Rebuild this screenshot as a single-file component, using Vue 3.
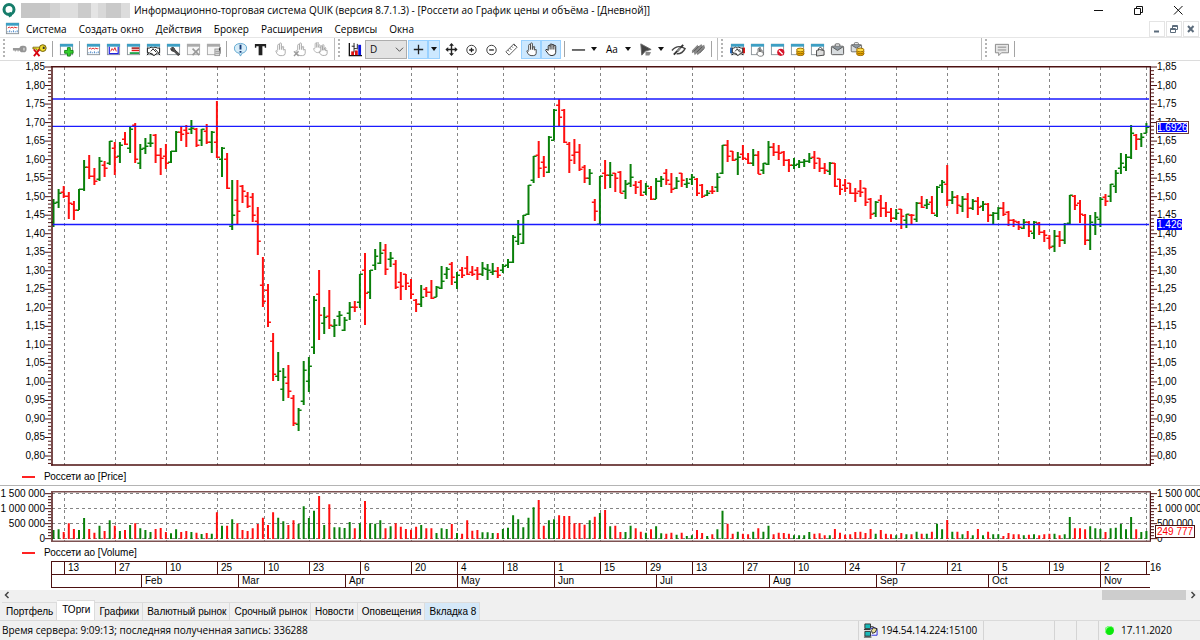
<script setup>
import { computed, ref } from 'vue'

// One bar per trading day: direction, high, low, open, close (plot units).
const priceSeries = `
u199,227,222,203 u189,208,202,193 d186,198,192,196 d192,219,196,203 d201,220,204,210 u189,210,210,189 u160,191,189,167
d155,179,167,176 d168,185,176,181 u157,181,179,161 d161,177,165,168 u141,165,163,141 d142,175,148,157 u142,163,156,145
d132,145,139,144 u127,153,148,129 d123,163,125,159 u144,169,163,149 u138,154,148,146 u134,147,143,143 d134,163,135,155
d148,175,155,158 d144,169,156,163 u151,163,162,151 u131,152,151,132 d126,141,132,134 d125,147,130,133 u120,134,129,128
d128,147,129,145 u129,146,140,129 d124,144,131,142 u131,153,142,132 d101,158,142,157 u147,177,159,148 d153,189,159,188
u180,230,226,215 d180,225,200,211 d185,203,186,191 d192,208,196,206 d193,222,197,215 d207,255,221,241 d257,307,285,301
d284,327,290,322 d333,381,341,374 u352,381,376,371 u368,401,389,377 d365,398,383,391 d395,426,398,423 u408,431,424,410
u361,405,401,370 u357,392,381,366 u296,354,347,300 d270,340,294,315 u307,334,323,317 d290,329,316,325 u319,337,326,325
u311,326,316,315 u317,331,330,320 u302,320,313,307 d301,312,307,307 u274,308,302,274 d253,325,270,293 u270,299,292,270
u249,270,265,256 u242,264,263,253 d244,275,250,269 u252,267,259,258 d260,289,264,287 d272,300,282,286 d274,290,274,283
d279,299,286,294 d299,312,300,304 u285,307,304,297 d287,297,289,292 d280,299,292,298 u286,297,297,287 u266,289,288,281
u267,279,274,269 d262,285,264,277 u272,289,282,275 d267,278,270,275 d256,275,268,274 d266,276,272,274 d267,280,270,274
u262,276,274,268 u264,280,269,270 u263,275,272,271 d267,278,271,275 u264,273,270,266 u259,268,265,262 u235,263,262,237
u220,245,241,234 u215,244,243,215 u185,215,214,185 u156,183,180,156 d141,178,155,168 d156,177,162,167 u136,173,172,137
u109,140,140,110 d99,126,105,117 d109,143,110,142 d142,173,144,160 d139,164,155,152 d144,171,152,169 d165,183,167,178
u169,185,178,173 d199,221,202,211 u176,224,224,176 d160,189,173,175 u162,188,175,175 d173,192,173,178 d171,193,172,193
u180,199,191,184 u164,187,183,177 d181,194,185,187 d180,196,182,195 u183,195,192,186 d186,200,188,199 u178,199,199,181
u176,187,181,179 d169,185,173,180 d173,193,184,189 u177,189,188,181 d173,187,173,180 u178,188,184,183 u174,185,179,177
d178,196,179,193 d184,198,185,196 u190,196,195,193 d186,194,191,191 u173,192,187,177 u145,174,173,145 d140,162,145,156
d151,161,151,160 u152,175,159,157 d145,160,154,158 d153,164,159,163 u149,166,163,155 d151,174,155,174 u163,174,170,163
u141,165,164,147 d143,156,147,152 d145,160,152,153 d151,166,152,160 d159,172,160,165 u158,169,165,165 u160,168,164,162
u159,167,162,161 u153,163,161,158 d151,169,157,163 d158,172,158,168 d163,174,168,170 u162,175,171,163 d163,187,163,186
d179,195,179,189 d179,192,185,188 d183,194,183,193 d188,202,193,193 d180,197,191,192 d188,206,188,202 d198,219,199,214
u201,217,213,202 d195,217,200,208 d202,217,208,212 d208,222,212,218 u209,220,218,213 d209,229,209,216 u214,228,220,214
d214,225,215,215 u202,222,219,203 d196,208,203,207 u199,209,205,204 d196,214,202,213 u186,217,215,187 u180,193,185,182
d165,206,184,200 u191,204,200,197 d195,214,197,205 u196,212,206,199 d193,218,199,208 u199,210,208,201 d197,215,201,207
u201,211,206,204 d203,222,204,215 u212,224,215,213 u207,220,213,208 d202,216,208,214 d211,226,212,220 d219,227,220,221
d221,230,222,227 u219,229,228,222 d221,237,222,231 u221,239,233,222 d222,235,223,232 d230,242,232,235 d235,249,238,247
u230,252,246,236 d231,247,236,240 u223,244,240,224 u195,225,223,195 d195,210,196,205 d200,223,203,214 d214,245,215,240
u215,250,240,222 u212,235,225,217 u197,227,219,199 d194,206,197,201 u184,202,196,184 u170,193,186,173 u153,174,168,163
u154,171,167,157 u125,159,157,133 d134,150,135,139 u133,147,139,137 u123,133,133,127`

// Top of each volume column; the zero line is at 236, 1 500 000 at 101.
const volumeTops = `
210 208 216 190 207 210 174 207 218 197 213 181 197 213 210 195 190 205 210 216 207 204 216 220 208 216 213 216 218 222
219 221 157 197 197 178 190 210 213 205 192 173 195 157 173 184 195 181 192 139 174 152 108 195 133 202 202 204 186 205
190 123 190 191 181 205 199 190 200 207 209 200 195 205 205 219 205 207 192 219 221 181 212 210 217 217 219 219 207 203
166 178 202 173 142 120 197 181 178 166 168 168 190 189 194 181 170 159 150 199 197 216 216 197 205 215 218 208 199 220
221 218 224 218 228 226 210 219 228 223 208 152 191 221 215 221 223 215 205 215 197 223 218 219 221 226 226 226 216 221
220 226 226 207 218 224 223 216 215 219 207 221 210 221 223 226 219 223 223 215 221 221 215 191 208 180 215 215 223 213
226 207 226 215 223 223 228 219 223 223 226 224 223 226 223 221 221 226 223 171 205 205 208 199 205 207 216 205 203 192
208 171 208 216 213`.trim().split(/\s+/).map(Number)

const barX = i => Math.round(535 + 51.07 * i) / 10
const bars = priceSeries.trim().split(/\s+/).map((s, i) => {
  const [high, low, open, close] = s.slice(1).split(',').map(Number)
  return { dir: s[0], x: barX(i), high, low, open, close, vol: volumeTops[i] }
})

const stems = dir => bars.filter(b => b.dir === dir).map(b => `M${b.x} ${b.high}V${b.low}`).join('')
const notches = dir => bars.filter(b => b.dir === dir)
  .map(b => `M${b.x - 3} ${b.open + 0.2}H${b.x}M${b.x} ${b.close + 0.2}H${b.x + 3}`).join('')
const columns = dir => bars.filter(b => b.dir === dir).map(b => `M${b.x} ${b.vol}V237`).join('')

const dayMarks = [
  ['13', 64], ['27', 115], ['10', 166], ['25', 217], ['10', 264], ['23', 309], ['6', 360], ['20', 411], ['4', 457],
  ['18', 503], ['1', 554], ['15', 600], ['29', 646], ['13', 692], ['27', 743], ['10', 794], ['24', 845], ['7', 896],
  ['21', 947], ['5', 998], ['19', 1049], ['2', 1100], ['16', 1146]
]
const monthMarks = [
  ['Feb', 141], ['Mar', 238], ['Apr', 345], ['May', 457], ['Jun', 554], ['Jul', 656], ['Aug', 769], ['Sep', 876],
  ['Oct', 988], ['Nov', 1100]
]
const cells = marks => {
  const all = [['', 51], ...marks]
  return all.map(([label, x], i) => ({ label, grow: (all[i + 1] ? all[i + 1][1] : 1150) - x }))
}
const timeRows = computed(() => [cells(dayMarks), cells(monthMarks)])

const priceLabels = Array.from({ length: 22 }, (_, i) => (1.85 - i * 0.05).toFixed(2).replace('.', ','))
const priceTicks = Array.from({ length: 108 }, (_, i) => ({ y: 67 + i * 3.705, major: i % 5 === 0 }))
const volumeLabels = ['1 500 000', '1 000 000', '500 000', '0']
const volumeTicks = Array.from({ length: 16 }, (_, i) => ({ y: 101 + i * 9, major: i % 5 === 0 }))
const tickPath = (ticks, left) => ticks
  .map(t => left ? `M${t.major ? 0 : 3} ${t.y}H6` : `M0 ${t.y}H${t.major ? 6 : 3}`).join('')

const win = '<rect x="1.5" y="2.5" width="13" height="11" fill="#fff" stroke="#8c9499"/><path d="M1 2h14v3H1z" fill="#3c9fc4"/>'
const winOff = '<rect x="1.5" y="2.5" width="13" height="11" fill="#f6f6f6" stroke="#aaa"/><path d="M1 2h14v3H1z" fill="#aaa"/>'
const hand = c => `<path d="M5 9V3.5q0-1 1-1t1 1V8M7 8V2q0-1 1-1t1 1v6l1-3q1-1 1.5.2L10.800 8.500l2.200-.5v4q0 2.500-3 2.500H7.500Q5.500 14.500 4 12L3 9.500Q4 8.500 5 10" fill="#fff" stroke="${c}"/>`
const coins = '<ellipse cx="11" cy="12.500" rx="4" ry="2" fill="#e9a400" stroke="#9a6a00"/><ellipse cx="11" cy="10.500" rx="4" ry="2" fill="#f5b800" stroke="#9a6a00"/><ellipse cx="11" cy="8.500" rx="4" ry="2" fill="#ffdc4a" stroke="#9a6a00"/>'
const briefcase = '<path d="M5.500 4.500V3q0-1 1-1h3q1 0 1 1v1.500" fill="none" stroke="#555"/><rect x="1.500" y="4.500" width="13" height="9" rx="1" fill="#d8dcdf" stroke="#555"/><path d="M2 5l6 4 6-4" fill="#8d979e" stroke="#555"/>'
const shake = '<path d="M1.500 6.500h2l2-1 2 1 2-1 3 1h2v5h-2l-4 3-5-3h-2z" fill="#fff" stroke="#111"/><path d="M5 10l2.500-2.500L11 11M5.500 11.500l2 2M9.500 7.500l3 3" fill="none" stroke="#222"/><path d="M1 14l2-2M15 14l-2-2" stroke="#111"/>'

const icons = {
  key: '<path d="M1 6.500h8v2.500H7V10H6V9H4v1H3V9H1z" fill="#999"/><rect x="8" y="4" width="7.500" height="7" rx="3" fill="#949494"/><path d="M12 6h1.500v3H12z" fill="#d6d6d6"/>',
  keyOff: '<path d="M1 5.500h8v2H7V9H5V7.500H1z" fill="#f3df2b" stroke="#6b5a00" stroke-width=".8"/><circle cx="11.500" cy="6.500" r="3.600" fill="#f0dc30" stroke="#6b5a00"/><path d="M11.500 5h2v2.500h-2z" fill="#333"/><path d="M2 8l6 7M8 8l-6 7" stroke="#d8000c" stroke-width="2"/>',
  add: win + '<path d="M9 6h3v3h3v3h-3v3H9v-3H6V9h3z" fill="#35d02c" stroke="#118514"/>',
  chart: win + '<path d="M3 7.500l1.500-1 1.500 1 1.500-1 1.500 1 1.500-1 1.500 1 1-1" fill="none" stroke="#e02020"/><path d="M3 12v-1M5 12v-2M7 12v-1M9 12v-2M11 12v-1M13 12v-2" stroke="#3c7ec4"/>',
  tick: win + '<path d="M3.500 5v7.500h9.500V5" fill="none" stroke="#2222e0" stroke-width="1.300"/><path d="M5 10l1.500-3 1.500 2 1.500-3 1.500 4" fill="none" stroke="#e02020"/>',
  quotes: win + '<path d="M6 6.500h8" stroke="#a01515" stroke-width="1.600"/><path d="M6 9h8" stroke="#e01818" stroke-width="1.600"/><path d="M4 11.800h10" stroke="#0a9a3a" stroke-width="1.800"/>',
  deals: win + shake,
  setup: win + '<path d="M6 6q3-1 3.500 2.500l5 4.500-1.500 1.500L8.500 10Q5 10 5 7l2 1z" fill="#555" stroke="#333"/>',
  winX: winOff + '<path d="M7 7l7 7M14 7l-7 7" stroke="#999" stroke-width="1.800"/>',
  winDb: winOff + '<rect x="9.500" y="7.500" width="5" height="7" fill="#ddd" stroke="#999"/><path d="M10 10h4M10 12h4M14 7l1.500-1.500v7" stroke="#999"/>',
  alert: '<path d="M8 1.500q6.500.5 6.500 5T9.500 12L8 15l-1.500-3Q1.500 11 1.500 6.500T8 1.500z" fill="#d6ecf8" stroke="#5fa6cf"/><path d="M8 3v5M8 9.500v2" stroke="#123a78" stroke-width="2"/>',
  text: '<path d="M2 2h12v4h-1.500V4.500H10V14H6V4.500H3.500V6H2z" fill="#222"/>',
  handOff: hand('#aaa'),
  handX: hand('#aaa') + '<path d="M1 10l5 5M6 10l-5 5" stroke="#999" stroke-width="1.500"/>',
  hands: '<g transform="translate(-2 -1) scale(.85)">' + hand('#aaa') + '</g><g transform="translate(4 2) scale(.85)">' + hand('#999') + '</g>',
  bars: '<path d="M2.500 1v13.500H16" fill="none" stroke="#111" stroke-width="1.400"/><path d="M4.500 10h3v4h-3z" fill="#e01010"/><path d="M12 3h3v11h-3z" fill="#0a12e0"/><path d="M8.500 9h3v5h-3z" fill="#e01010"/><path d="M7.500 1v10M5 4.500h3M7.500 7h3M11 2v6" stroke="#222"/>',
  cross: '<path d="M8 3v10M3 8h10" stroke="#222" stroke-width="1.400"/>',
  move: '<path d="M8 2.500v11M2.500 8h11" stroke="#222" stroke-width="1.500"/><path d="M8 1l2.600 3H5.400zM8 15l2.600-3H5.400zM1.500 8l3-2.600v5.200zM14.500 8l-3-2.600v5.200z" fill="#222"/>',
  zoomIn: '<circle cx="8" cy="8.500" r="5" fill="none" stroke="#333"/><path d="M8 6v5M5.500 8.500h5" stroke="#222" stroke-width="1.400"/>',
  zoomOut: '<circle cx="8" cy="8.500" r="5" fill="none" stroke="#333"/><path d="M5.500 8.500h5" stroke="#222" stroke-width="1.400"/>',
  ruler: '<path d="M2 10.500L10.500 2l3.500 3.500L5.500 14z" fill="#fff" stroke="#555"/><path d="M4 8.500l1.500 1.500M6 6.500l2 2M8 4.500l1.500 1.500M10 2.500l2 2" stroke="#555"/>',
  handOne: hand('#444'),
  handOpen: '<path d="M4.500 9V4.500q0-1 1-1t1 1V3q0-1 1-1t1 1v.5q0-1 1-1t1 1v1q0-1 1-1t1 1V11q0 3.500-4 3.500-3 0-4-2L1.800 9q0-1.500 1.400-1z" fill="#fff" stroke="#222"/><path d="M6.500 4v4M8.500 3.500V8M10.500 4v4" stroke="#222"/>',
  line: '<path d="M1 8.500h14" stroke="#222" stroke-width="1.400"/>',
  shape: '<path d="M3 2l11 6-6 1.500L4 14z" fill="#444" stroke="#666"/><path d="M8 10l6 1-2 3.500H8z" fill="#888"/>',
  eye: '<path d="M1 9q6-7 14-2-3 6-9 5.500" fill="none" stroke="#444" stroke-width="1.500"/><path d="M3 13.500L13 3" stroke="#333" stroke-width="2"/><path d="M7 10l3-4" stroke="#888" stroke-width="2"/>',
  brush: '<path d="M1 9l6-6 1 2 3-3 1 2 2-1 1 3-8 8-1-2-2 2-1-3-2 1z" fill="#888"/><path d="M3 10l6-6M6 11l6-6M9 12l5-5" stroke="#555"/>',
  dealWin: win + '<path d="M0 6h3v6H0z" fill="#2a70c0"/><path d="M13 6h3v6h-3z" fill="#d81818"/><g transform="translate(1.200 0) scale(.85 1)">' + shake + '</g>',
  handWin: win + '<g transform="translate(5 5) scale(.7)">' + hand('#444') + '</g>',
  stopWin: win + '<circle cx="11.500" cy="11" r="3.800" fill="#d8152a"/><path d="M9.500 9l4 4" stroke="#fff" stroke-width="1.400"/>',
  coinWin: win + coins,
  lockWin: win + '<path d="M7 9l3-1 5 1v5l-8 1z" fill="#ddd" stroke="#444"/><path d="M9 9V7q2-2.500 4 0v2" fill="none" stroke="#444"/>',
  bag: briefcase,
  bagCoin: '<g transform="translate(0 -1) scale(.85)">' + briefcase + '</g>' + coins,
  note: '<path d="M1.500 2.500h14v9H8l-3 3v-3H1.500z" fill="#e6e6e6" stroke="#888"/><path d="M4 5.500h9M4 8.500h9" stroke="#888"/>'
}

const groups = [
  [['key', 'Подключиться'], ['keyOff', 'Отключиться'], '|', ['add', 'Новая таблица'], '|', ['chart', 'График'],
    ['tick', 'Тиковый график'], ['quotes', 'Котировки'], ['deals', 'Сделки'], ['setup', 'Настройка'],
    ['winX', 'Закрыть окно'], ['winDb', 'Экспорт'], '|', ['alert', 'Оповещение'], ['text', 'Текст'],
    ['handOff', 'Заявка'], ['handX', 'Снять заявку'], ['hands', 'Снять все']],
  [['dealWin', 'Таблица сделок'], ['handWin', 'Таблица заявок'], ['stopWin', 'Стоп-заявки'], ['coinWin', 'Деньги'],
    ['lockWin', 'Лимиты'], ['bag', 'Портфель'], ['bagCoin', 'Портфель клиента']]
]

const menu = ['Система', 'Создать окно', 'Действия', 'Брокер', 'Расширения', 'Сервисы', 'Окна']
const tabs = ['Портфель', 'ТОрги', 'Графики', 'Валютный рынок', 'Срочный рынок', 'Новости', 'Оповещения', 'Вкладка 8']
const activeTab = ref('ТОрги')
const interval = ref('D')
</script>

<template>
  <div class="window">
    <header class="titlebar">
      <svg class="logo" viewBox="0 0 16 16" aria-hidden="true">
        <circle cx="8" cy="7.500" r="5" fill="none" stroke="#167d6b" stroke-width="3" />
        <path d="M7 11l3-1 1 4-3 1.500z" fill="#167d6b" />
      </svg>
      <span class="masked"></span>
      <h1>Информационно-торговая система QUIK (версия 8.7.1.3) - [Россети ао График цены и объёма - [Дневной]]</h1>
      <div class="sysbuttons">
        <button type="button" aria-label="Свернуть"><svg viewBox="0 0 12 12"><path d="M2 6.500h9" /></svg></button>
        <button type="button" aria-label="Восстановить"><svg viewBox="0 0 12 12"><path d="M2.500 4.500h6v6h-6zM4.500 4V2.500h6v6H9" /></svg></button>
        <button type="button" aria-label="Закрыть"><svg viewBox="0 0 12 12"><path d="M2 2l8.500 8.500M10.500 2L2 10.500" /></svg></button>
      </div>
    </header>

    <nav class="menubar">
      <svg class="menu-icon" viewBox="0 0 16 16" aria-hidden="true" v-html="icons.chart"></svg>
      <button v-for="m in menu" :key="m" type="button" class="menu-item">{{ m }}</button>
      <div class="mdi">
        <button type="button" aria-label="Свернуть окно"><svg viewBox="0 0 12 12"><path d="M3 8.500h5" /></svg></button>
        <button type="button" aria-label="Восстановить окно"><svg viewBox="0 0 12 12"><path class="thin" d="M2.500 5.500h5v4h-5zM4.500 5V2.500h5v4H8M4.500 3.500h5M2.500 6.500h5" /></svg></button>
        <button type="button" aria-label="Закрыть окно"><svg viewBox="0 0 12 12"><path d="M3 3l5.500 6M8.500 3L3 9" /></svg></button>
      </div>
    </nav>

    <div class="toolbars">
      <div class="toolbar">
        <i class="grip"></i>
        <template v-for="(t, i) in groups[0]" :key="i">
          <i v-if="t === '|'" class="sep"></i>
          <button v-else type="button" class="tool" :aria-label="t[1]"><svg viewBox="0 0 16 16" v-html="icons[t[0]]"></svg></button>
        </template>
      </div>
      <div class="toolbar">
        <i class="grip"></i>
        <button type="button" class="tool" aria-label="Тип графика"><svg viewBox="0 0 16 16" v-html="icons.bars"></svg></button>
        <span class="combo">
          <select v-model="interval" aria-label="Интервал"><option>D</option><option>W</option></select>
          <svg viewBox="0 0 10 10" aria-hidden="true"><path d="M1 3l4 4 4-4" /></svg>
        </span>
        <button type="button" class="tool on" aria-label="Перекрестие"><svg viewBox="0 0 16 16" v-html="icons.cross"></svg></button>
        <button type="button" class="drop on" aria-label="Вид курсора"></button>
        <button type="button" class="tool" aria-label="Переместить"><svg viewBox="0 0 16 16" v-html="icons.move"></svg></button>
        <button type="button" class="tool" aria-label="Увеличить"><svg viewBox="0 0 16 16" v-html="icons.zoomIn"></svg></button>
        <button type="button" class="tool" aria-label="Уменьшить"><svg viewBox="0 0 16 16" v-html="icons.zoomOut"></svg></button>
        <button type="button" class="tool" aria-label="Линейка"><svg viewBox="0 0 16 16" v-html="icons.ruler"></svg></button>
        <button type="button" class="tool on" aria-label="Выбор"><svg viewBox="0 0 16 16" v-html="icons.handOne"></svg></button>
        <button type="button" class="tool on" aria-label="Прокрутка"><svg viewBox="0 0 16 16" v-html="icons.handOpen"></svg></button>
        <i class="sep"></i>
        <button type="button" class="tool" aria-label="Линия"><svg viewBox="0 0 16 16" v-html="icons.line"></svg></button>
        <button type="button" class="drop" aria-label="Виды линий"></button>
        <button type="button" class="tool label">Aa</button>
        <button type="button" class="drop" aria-label="Виды текста"></button>
        <button type="button" class="tool" aria-label="Фигура"><svg viewBox="0 0 16 16" v-html="icons.shape"></svg></button>
        <button type="button" class="drop" aria-label="Виды фигур"></button>
        <button type="button" class="tool" aria-label="Скрыть"><svg viewBox="0 0 16 16" v-html="icons.eye"></svg></button>
        <button type="button" class="tool" aria-label="Очистить"><svg viewBox="0 0 16 16" v-html="icons.brush"></svg></button>
        <i class="sep"></i>
      </div>
      <div class="toolbar tables">
        <i class="grip"></i>
        <button v-for="t in groups[1]" :key="t[0]" type="button" class="tool" :aria-label="t[1]"><svg viewBox="0 0 16 16" v-html="icons[t[0]]"></svg></button>
      </div>
      <div class="toolbar rest">
        <i class="grip"></i>
        <button type="button" class="tool" aria-label="Сообщения"><svg viewBox="0 0 16 16" v-html="icons.note"></svg></button>
        <i class="sep"></i>
      </div>
    </div>

    <main class="chart">
      <section class="pane price">
        <div class="axis left">
          <div class="labels"><span v-for="l in priceLabels" :key="l">{{ l }}</span></div>
          <svg viewBox="0 66 6 400" preserveAspectRatio="none"><path :d="tickPath(priceTicks, true)" class="tickmarks" /></svg>
        </div>
        <svg class="plot" viewBox="51 66 1100 400" preserveAspectRatio="none">
          <path v-for="d in dayMarks" :key="d[1]" :d="`M${d[1] + 0.5} 67V465`" class="grid" />
          <path :d="stems('u')" class="up" /><path :d="notches('u')" class="up notch" />
          <path :d="stems('d')" class="down" /><path :d="notches('d')" class="down notch" />
          <path d="M52 99H1149M52 126.300H1150M52 224.500H1149" class="level" />
          <path d="M52 66V465.500M1150.500 66V465.500" class="frame" />
          <path d="M51 66.700H1151M51 465H1151" class="frame" />
        </svg>
        <div class="axis right">
          <svg viewBox="0 66 6 400" preserveAspectRatio="none"><path :d="tickPath(priceTicks, false)" class="tickmarks" /></svg>
          <div class="labels"><span v-for="l in priceLabels" :key="l">{{ l }}</span></div>
          <b class="tag last">1.6926</b>
          <b class="tag low">1.426</b>
        </div>
      </section>
      <div class="legend first">Россети ао [Price]</div>
      <section class="pane volume">
        <div class="axis left">
          <div class="labels"><span v-for="l in volumeLabels" :key="l">{{ l }}</span></div>
          <svg viewBox="0 93 6 153" preserveAspectRatio="none"><path :d="tickPath(volumeTicks, true)" class="tickmarks" /></svg>
        </div>
        <svg class="plot" viewBox="51 93 1100 153" preserveAspectRatio="none">
          <path v-for="d in dayMarks" :key="d[1]" :d="`M${d[1] + 0.5} 96V244`" class="grid" />
          <path d="M52 100.500H1150M52 145.500H1150M52 190.500H1150M52 235.500H1150" class="grid" />
          <path :d="columns('u')" class="up" /><path :d="columns('d')" class="down" />
          <path d="M52 94V244M1150.500 94V244" class="frame" />
          <path d="M51 95.500H1151M51 244H1151" class="frame soft" />
        </svg>
        <div class="axis right">
          <svg viewBox="0 93 6 153" preserveAspectRatio="none"><path :d="tickPath(volumeTicks, false)" class="tickmarks" /></svg>
          <div class="labels"><span v-for="l in volumeLabels" :key="l">{{ l }}</span></div>
          <b class="tag vol">249 777</b>
        </div>
      </section>
      <div class="legend">Россети ао [Volume]</div>
      <div class="timeline">
        <div v-for="(row, r) in timeRows" :key="r" class="timerow">
          <span v-for="(c, i) in row" :key="i" :style="{ flexGrow: c.grow }">{{ c.label }}</span>
        </div>
      </div>
    </main>

    <div class="scroll">
      <button type="button" aria-label="Влево"><svg viewBox="0 0 10 10"><path d="M6.500 2l-3 3 3 3" /></svg></button>
      <span class="thumb"></span>
      <button type="button" aria-label="Вправо"><svg viewBox="0 0 10 10"><path d="M3.500 2l3 3-3 3" /></svg></button>
    </div>

    <nav class="tabs">
      <button v-for="t in tabs" :key="t" type="button" :class="{ active: t === activeTab, marked: t === 'Вкладка 8' }" @click="activeTab = t">{{ t }}</button>
    </nav>

    <footer class="status">
      <span class="server">Время сервера: 9:09:13; последняя полученная запись: 336288</span>
      <span class="host">
        <svg viewBox="0 0 16 16" aria-hidden="true">
          <path d="M2 1h6v5H2zM2 9h6v5H2z" fill="#18b8b8" stroke="#333" />
          <path d="M1 7h8M1 15h8M8 4h3v3" stroke="#222" fill="none" />
          <path d="M8 6l5-1 2 2v6H9" fill="#fff" stroke="#2323d8" /><path d="M9 8l2-3 4 1-2 4-3 1z" fill="#e6dc9a" stroke="#222" />
        </svg>194.54.14.224:15100
      </span>
      <span class="cell wide"></span><span class="cell"></span><span class="cell"></span>
      <span class="date"><i></i>17.11.2020</span>
    </footer>
  </div>
</template>

<style>
html, body { margin: 0; }
</style>

<style scoped>
.window {
  display: flex;
  flex-direction: column;
  min-height: 100vh;
  background: #fff;
  color: #000;
  font: 10px/16px "Open Sans", "Noto Sans", sans-serif;
}
.window *, .window { box-sizing: border-box; }
button {
  margin: 0;
  padding: 0;
  border: 0;
  background: none;
  color: inherit;
  font: inherit;
}
.titlebar { display: flex; align-items: center; height: 20px; padding-left: 1px; }
.logo { width: 16px; height: 16px; margin-right: 4px; }
.masked {
  width: 109px;
  height: 15px;
  margin-right: 4px;
  background: linear-gradient(90deg, #c6c6c6 0 29px, #d2d2d2 29px 39px, #dedede 39px 57px, #cbcbcb 57px 70px, #e4e4e4 70px 77px, #d8d8d8 77px 85px, #c9c9c9 85px 100px, #dcdcdc 100px);
}
h1 { flex: 1; margin: 0; font: inherit; white-space: nowrap; }
.sysbuttons { display: flex; padding-right: 2px; }
.sysbuttons button { display: flex; align-items: center; justify-content: center; width: 40px; height: 18px; }
.sysbuttons svg { width: 12px; height: 12px; fill: none; stroke: #111; }
.menubar { display: flex; align-items: center; height: 17px; padding-left: 5px; gap: 12px; }
.menu-icon { width: 15px; height: 15px; margin-right: -6px; }
.menu-item { white-space: nowrap; }
.mdi { display: flex; gap: 1px; margin-left: auto; padding-right: 1px; }
.mdi button { display: flex; align-items: center; justify-content: center; width: 16px; height: 16px; border: 1px solid #e4e4e4; }
.mdi svg { width: 12px; height: 12px; fill: none; stroke: #5c6c7c; stroke-width: 2; }
.mdi .thin { stroke-width: 1; }

.toolbars { display: flex; height: 24px; border-top: 1px solid #e6e6e6; border-bottom: 1px solid #dcdcdc; }
.toolbar { display: flex; align-items: center; border-right: 1px solid #bdbdbd; flex: none; padding-right: 4px; }
.toolbar:nth-child(2) { padding-right: 2px; }
.toolbar.tables { width: 264px; }
.toolbar.rest { flex: 1; border-right: 0; }
.grip { align-self: stretch; width: 2px; margin: 1px 4px 1px 3px; background: repeating-linear-gradient(#b4b4b4 0 2px, #fff 2px 4px); }
.sep { width: 1px; height: 16px; margin: 0 3px; background: #a4a4a4; }
.tool { display: flex; align-items: center; justify-content: center; width: 20px; height: 19px; flex: none; }
.tool svg { width: 15px; height: 15px; }
.tool.label { margin-left: 1px; }
.on { background: #cce8ff; box-shadow: inset 0 0 0 1px #99d1ff; }
.drop { width: 12px; height: 19px; margin-right: 1px; }
.drop::before { content: ""; display: block; width: 0; margin: 0 auto; border: 3px solid transparent; border-top: 4px solid #111; border-bottom: 0; }
.combo { position: relative; width: 42px; height: 19px; margin: 0 1px; }
.combo select {
  appearance: none;
  width: 100%;
  height: 100%;
  padding: 0 4px;
  border: 1px solid #adadad;
  border-radius: 0;
  background: #e3e3e3;
  color: #111;
  font: inherit;
}
.combo svg { position: absolute; right: 3px; top: 5px; width: 9px; height: 9px; fill: none; stroke: #444; pointer-events: none; }

.chart { display: flex; flex: 1; flex-direction: column; padding-bottom: 2px; font: 10px/12px "Liberation Sans", Arial, sans-serif; }
.pane { display: grid; grid-template-columns: 51px 1fr 49px; }
.price { flex: 1; min-height: 405px; }
.volume { height: 59px; }
.axis { position: relative; display: flex; min-width: 0; }
.axis svg { width: 6px; height: calc(100% - 5px); margin-top: 5px; flex: none; }
.labels { display: flex; flex: 1; flex-direction: column; justify-content: space-between; white-space: nowrap; }
.left .labels { align-items: flex-end; }
.price .labels { margin-bottom: 4px; }
.volume .labels { margin-top: 2px; }
.volume .axis svg, .volume .plot { height: 51px; }
.plot { display: block; width: 100%; height: calc(100% - 5px); margin-top: 5px; min-height: 0; }
.plot path, .tickmarks { fill: none; vector-effect: non-scaling-stroke; }
.tickmarks, .plot .frame { stroke: #4c1111; stroke-width: 1; }
.plot .frame { stroke-width: 1.500; }
.plot .soft { stroke: #7d5252; }
.plot .grid { stroke: #858585; stroke-dasharray: 3 3; }
.plot .up { stroke: #0a800a; stroke-width: 2; }
.plot .down { stroke: #ff1010; stroke-width: 2; }
.plot .notch { stroke-width: 1.500; }
.plot .level { stroke: #1a1aff; stroke-width: 1.300; }
.tag { position: absolute; left: 6px; font-weight: 400; color: #fff; background: #00f; white-space: nowrap; line-height: 11px; }
.last { top: 14.800%; left: 5px; border: 1px solid #6a3a3a; box-shadow: inset 0 0 0 1px #fff; }
.low { top: 39%; }
.vol { left: 4px; top: 39px; padding: 0 1px; border: 1px solid #4c1111; background: #fff; color: #f00; }
.legend { display: flex; align-items: center; gap: 9px; height: 16px; padding-left: 22px; }
.legend::before { content: ""; width: 13px; height: 2px; background: #f22; }
.legend.first { height: 20px; padding-top: 2px; border-bottom: 1px solid #b4b4b4; }
.timeline { margin: 0 50px 0 51px; border-bottom: 1px solid #4c1111; }
.timerow { display: flex; height: 13px; border-top: 1px solid #4c1111; }
.timerow span { flex: 0 0 0px; width: 0; box-shadow: inset 1px 0 0 #4c1111; text-indent: 4px; white-space: nowrap; }

.scroll { display: flex; align-items: center; height: 10px; background: #f0f0f0; }
.scroll button { display: flex; width: 14px; height: 10px; justify-content: center; }
.scroll svg { width: 10px; height: 10px; fill: none; stroke: #444; stroke-width: 1.500; }
.thumb { width: 84px; height: 10px; margin-left: auto; background: #cdcdcd; }
.tabs { display: flex; align-items: flex-end; height: 21px; padding-left: 2px; border-bottom: 1px solid #dadada; background: #f0f0f0; font: 10px/12px "Liberation Sans", Arial, sans-serif; }
.tabs button { height: 18px; padding: 0 3px 0 4px; border: 1px solid #dcdcdc; border-width: 1px 1px 0 0; white-space: nowrap; }
.tabs .active { height: 20px; padding: 0 4px 2px 5px; background: #fff; }
.tabs .marked { background: #d5e8f8; }
.status { display: flex; align-items: stretch; height: 19px; background: #f0f0f0; line-height: 19px; white-space: nowrap; }
.server { flex: 1; padding-left: 2px; }
.status > span + span { border-left: 1px solid #d4d4d4; }
.host { display: flex; align-items: center; width: 125px; padding-left: 4px; gap: 3px; }
.host svg { width: 15px; height: 15px; flex: none; }
.cell { width: 22px; }
.cell.wide { width: 71px; }
.date { display: flex; align-items: center; width: 102px; padding-left: 6px; gap: 7px; }
.date i { width: 9px; height: 9px; border-radius: 50%; background: #0be80b; box-shadow: inset 1px 1px 0 #8aff8a; }
</style>
